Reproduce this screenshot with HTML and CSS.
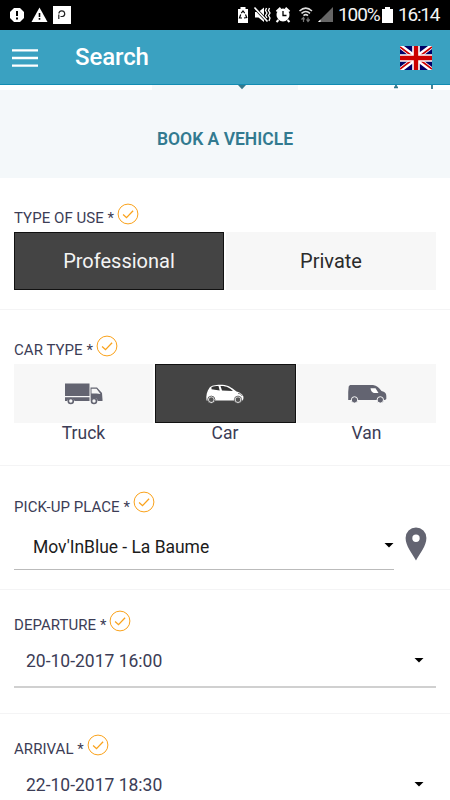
FILE: index.html
```html
<!DOCTYPE html>
<html lang="en">
<head>
<meta charset="utf-8">
<title>Search</title>
<link rel="stylesheet" href="styles.css">
</head>
<body>
<svg width="0" height="0" class="defs" aria-hidden="true">
  <symbol id="check" viewBox="0 0 22 22"><circle cx="11" cy="11" r="9.900" fill="none" stroke="#faa21b" stroke-width="1"/><path d="M6.100 11.500l3.400 3.200 6.600-7" fill="none" stroke="#faa21b" stroke-width="1.300"/></symbol>
</svg>
<div class="status">
  <svg class="status-left" width="72" height="30" viewBox="0 0 72 30">
    <path d="M14 8h6l4 4v6l-4 4h-6l-4-4v-6z" fill="#fff"/><path d="M17 11v5M17 17.500v2" stroke="#000" stroke-width="2"/>
    <path d="M39.500 7.500l8 14.500h-16z" fill="#fff"/><path d="M39.500 13v4M39.500 18v1.800" stroke="#000" stroke-width="1.600"/>
    <path d="M53 6h18v18H53z" fill="#fff"/><path d="M58.800 19v-4.500M60.500 16.500h2a2.900 2.900 0 1 0-3.600-2.900" fill="none" stroke="#222" stroke-width="1.200"/>
  </svg>
  <svg class="status-right" width="102" height="30" viewBox="235 0 102 30">
    <path d="M238 9h2.500V7h5v2h2.500v14h-10z" fill="#fff"/><path d="M241.300 13.200l1.700-2.200 1.700 2.200M245.500 14.500l1.200 3-2.700.5M242 18h-2.500l1.200-3.500" fill="none" stroke="#000" stroke-width="1.200"/>
    <path d="M255 12h3.500l5.500-4.500V22l-5.500-4.500H255z" fill="#fff"/><path d="M254.500 7.500l13 14" stroke="#000" stroke-width="3"/><path d="M254.500 7.500l13 14" stroke="#fff" stroke-width="1.600"/><path d="M266.500 8l-1 2.500 1.500 2.500-1.500 2.500 1.500 2.500M269.500 8l-1 2.500 1.500 2.500-1.500 2.500 1.500 2.500-1 3" fill="none" stroke="#fff" stroke-width="1.300"/>
    <circle cx="283" cy="15" r="6.500" fill="#fff"/><path d="M276.500 11.500l4-3.700M289.500 11.500l-4-3.700M278.500 20l-2 2M287.500 20l2 2" stroke="#fff" stroke-width="2"/><path d="M283 11v4.500h3.500" fill="none" stroke="#000" stroke-width="1.300"/>
    <path d="M299.500 11c4-3.700 8.500-3.700 12.500 0M301.500 13.400c2.900-2.500 5.700-2.500 8.500 0M303.500 15.600c1.500-1.300 3-1.300 4.500 0" fill="none" stroke="#ddd" stroke-width="1.500"/><path d="M303.500 22v-3.500M301.500 19.500l2-2 1 2M308 17.500V21M306.500 19.500l1.500 2 1.700-2" fill="none" stroke="#777" stroke-width="1.200"/>
    <path d="M333 7v15h-15z" fill="#666"/><path d="M320.500 19.500V22H318z" fill="#fff"/>
  </svg>
  <span class="percent">100%</span>
  <svg class="battery" width="11" height="16" viewBox="0 0 11 16"><path d="M0 2h3V0h5v2h3v14H0z" fill="#fff"/></svg>
  <span class="clock">16:14</span>
</div>
<header class="bar">
  <svg class="menu" width="26" height="18" viewBox="0 0 26 18"><path d="M0 1.400h26M0 9h26M0 16.600h26" stroke="#fff" stroke-width="2.400"/></svg>
  <h1>Search</h1>
  <svg class="flag" width="32" height="24" viewBox="0 0 32 24">
    <path d="M0 0h32v24H0z" fill="#006"/><path d="M0 0l32 24M32 0L0 24" stroke="#fff" stroke-width="4.800"/><path d="M0 1l12 9M32 1l-12 9M0 23l12-9M32 23l-12-9" stroke="#c00" stroke-width="1.600"/><path d="M16 0v24M0 12h32" stroke="#fff" stroke-width="7.600"/><path d="M16 0v24M0 12h32" stroke="#c00" stroke-width="4.400"/>
  </svg>
</header>
<div class="tabs">
  <div class="tab"></div>
  <div class="tab active"><svg width="10" height="5" viewBox="0 0 10 5"><path d="M1 0h8L5 4.300z" fill="#34788c"/></svg></div>
  <div class="tab last"><svg width="42" height="5" viewBox="0 0 42 5"><path d="M2 2.300h4M4 0v2.500M40 0v4" stroke="#34788c" stroke-width="1.800"/></svg></div>
</div>
<div class="hero"><h2>BOOK A VEHICLE</h2></div>
<main>
  <section class="use">
    <div class="label"><span>TYPE OF USE *</span><svg><use href="#check"/></svg></div>
    <div class="choices two">
      <div class="choice selected"><span>Professional</span></div>
      <div class="choice"><span>Private</span></div>
    </div>
  </section>
  <section class="type">
    <div class="label"><span>CAR TYPE *</span><svg><use href="#check"/></svg></div>
    <div class="choices three">
      <div class="option"><div class="choice">
        <svg width="40" height="22" viewBox="0 0 40 22"><path d="M1 .5h24.500v12.500H1zM1 14.300h24.500V18H10.500a3.800 3.800 0 0 0-7.300 0H1zM26.500 4.500H33l5 5.500.5 6.500v1.500h-4.800a3.600 3.600 0 0 0-7-.5z" fill="#636471"/><path d="M27.500 5.700h5l4 5.200-4-.4h-5z" fill="#f7f7f7"/><circle cx="6.800" cy="18" r="2.500" fill="none" stroke="#636471" stroke-width="1.600"/><circle cx="30" cy="18" r="2.500" fill="none" stroke="#636471" stroke-width="1.600"/></svg>
      </div><span>Truck</span></div>
      <div class="option"><div class="choice selected">
        <svg width="40" height="22" viewBox="0 0 40 22"><path d="M1.500 17.500C.8 13 2 8 4.500 4.800 6.500 1.800 14 1.300 19.500 2c5.500 1 8.500 4 12 6.500 3.500 1 6 2.600 6.700 4.500.5 1.800.3 3.500-.7 4.500z" fill="#fff"/><path d="M6.500 4.200c2-1 4.500-1.200 7-1.200l1.200 4.500-8.200-1.200zM15.500 3c6-.2 9.500 2 12.500 5l-11-.4z" fill="#333"/><path d="M33 10.300c2 .3 3.500 1.300 4.300 2.700" fill="none" stroke="#555" stroke-width=".8"/><circle cx="6.300" cy="16.700" r="3.600" fill="#fff" stroke="#444" stroke-width=".8"/><circle cx="6.300" cy="16.700" r="2.400" fill="#555"/><circle cx="33" cy="16.700" r="3.600" fill="#fff" stroke="#444" stroke-width=".8"/><circle cx="33" cy="16.700" r="2.400" fill="#555"/></svg>
      </div><span>Car</span></div>
      <div class="option"><div class="choice">
        <svg width="40" height="22" viewBox="0 0 40 22"><path d="M1.700 3.500L3 2h23c4 .5 6 3 8.500 6 4.500 1.200 5.200 3 4.800 8L38 17H1.200V9z" fill="#636471"/><path d="M23.500 5.200h5l3 4.700h-4.700c-2-.5-3-2.500-3.300-4.700z" fill="#fff"/><circle cx="7.500" cy="16.900" r="3.200" fill="#636471" stroke="#f7f7f7"/><circle cx="33.300" cy="16.900" r="3.200" fill="#636471" stroke="#f7f7f7"/></svg>
      </div><span>Van</span></div>
    </div>
  </section>
  <section class="place">
    <div class="label"><span>PICK-UP PLACE *</span><svg><use href="#check"/></svg></div>
    <div class="place-row">
      <div class="field"><span>Mov'InBlue - La Baume</span><i class="caret"></i></div>
      <svg class="pin" width="22" height="34" viewBox="0 0 22 34"><path d="M11 .5A10.400 10.400 0 0 0 .6 11C.6 19 7 26 11 33.500 15 26 21.400 19 21.400 11A10.400 10.400 0 0 0 11 .5zm0 7a3.700 3.700 0 1 1 0 7.400 3.700 3.700 0 0 1 0-7.400z" fill="#636471"/></svg>
    </div>
  </section>
  <section class="date">
    <div class="label"><span>DEPARTURE *</span><svg><use href="#check"/></svg></div>
    <div class="field"><span>20-10-2017 16:00</span><i class="caret"></i></div>
  </section>
  <section class="date">
    <div class="label"><span>ARRIVAL *</span><svg><use href="#check"/></svg></div>
    <div class="field"><span>22-10-2017 18:30</span><i class="caret"></i></div>
  </section>
</main>
</body>
</html>
```
FILE: styles.css
```css
* { box-sizing: border-box; }
body { margin: 0; height: 800px; overflow: hidden; background: #fff; font-family: Roboto, "Liberation Sans", sans-serif; color: #3c3d56; }
svg { display: block; flex: none; }
.defs { position: absolute; }
.status { display: flex; align-items: center; height: 30px; background: #000; color: #f4f4f4; font-size: 19px; line-height: 32px; }
.status-right { margin-left: 163px; }
.percent { width: 41px; margin-left: 1px; letter-spacing: -1.100px; white-space: nowrap; }
.battery { margin-left: 3px; }
.clock { margin-left: 5px; letter-spacing: -1.200px; }
.bar { display: flex; align-items: center; height: 55px; padding: 0 18px 0 12px; background: #3aa1c1; border-bottom: 1px solid #128cb2; }
.menu { margin-top: 2px; }
.bar h1 { flex: 1; margin: 0 0 0 37px; font-size: 24px; font-weight: 500; line-height: 30px; letter-spacing: -.1px; color: #fff; }
.flag { margin-top: 1px; }
.tabs { display: flex; height: 5px; background: #f4f8fa; }
.tab { width: 152px; background: #fff; }
.tab.active { width: 146px; background: #f4f8fa; padding-left: 85px; }
.tab.last { padding-left: 94px; }
.hero { height: 88px; padding-top: 37px; background: #f4f8fa; text-align: center; }
.hero h2 { margin: 0; font-size: 17.500px; line-height: 25px; font-weight: 600; color: #327a90; }
section { border-bottom: 1px solid #f4f4f5; padding: 0 14px; }
.use { height: 132px; padding-top: 25px; }
.type { height: 156px; padding-top: 25px; }
.place { height: 124px; padding-top: 26px; }
.date { height: 124px; padding-top: 20px; }
.label { display: flex; height: 29px; font-size: 15px; line-height: 31px; letter-spacing: .05px; }
.label svg { width: 22px; height: 22px; margin-left: 3px; }
.place .label { line-height: 30px; }
.place .label svg { margin-top: -1px; }
.choices { display: flex; justify-content: space-between; }
.choice { display: flex; align-items: center; justify-content: center; height: 58px; background: #f7f7f7; color: #2b2b2b; font-size: 20px; }
.choice.selected { background: #444; border: 1px solid #111; color: #f4f4f4; }
.two .choice { width: 210px; }
.option { width: 139px; text-align: center; font-size: 17.500px; line-height: 21px; }
.three .choice { height: 59px; }
.option:nth-child(2) { width: 141px; }
.place-row { display: flex; }
.field { display: flex; align-items: center; justify-content: space-between; height: 49px; border-bottom: 2px solid #d0d0d0; font-size: 17.500px; }
.place .field { width: 380px; padding: 2px 0 0 19px; border-bottom: 1px solid #bbb; color: #1c1c1c; letter-spacing: -.03px; }
.place .caret { margin-top: -2px; }
.date .field { padding: 0 12px 4px; }
.date .caret { margin-top: -1px; }
.caret { width: 10px; height: 5px; background: #000; clip-path: polygon(0 0, 100% 0, 50% 100%); }
.place .field span { padding-top: 2px; }
.pin { margin: 6px 0 0 11px; }
```
